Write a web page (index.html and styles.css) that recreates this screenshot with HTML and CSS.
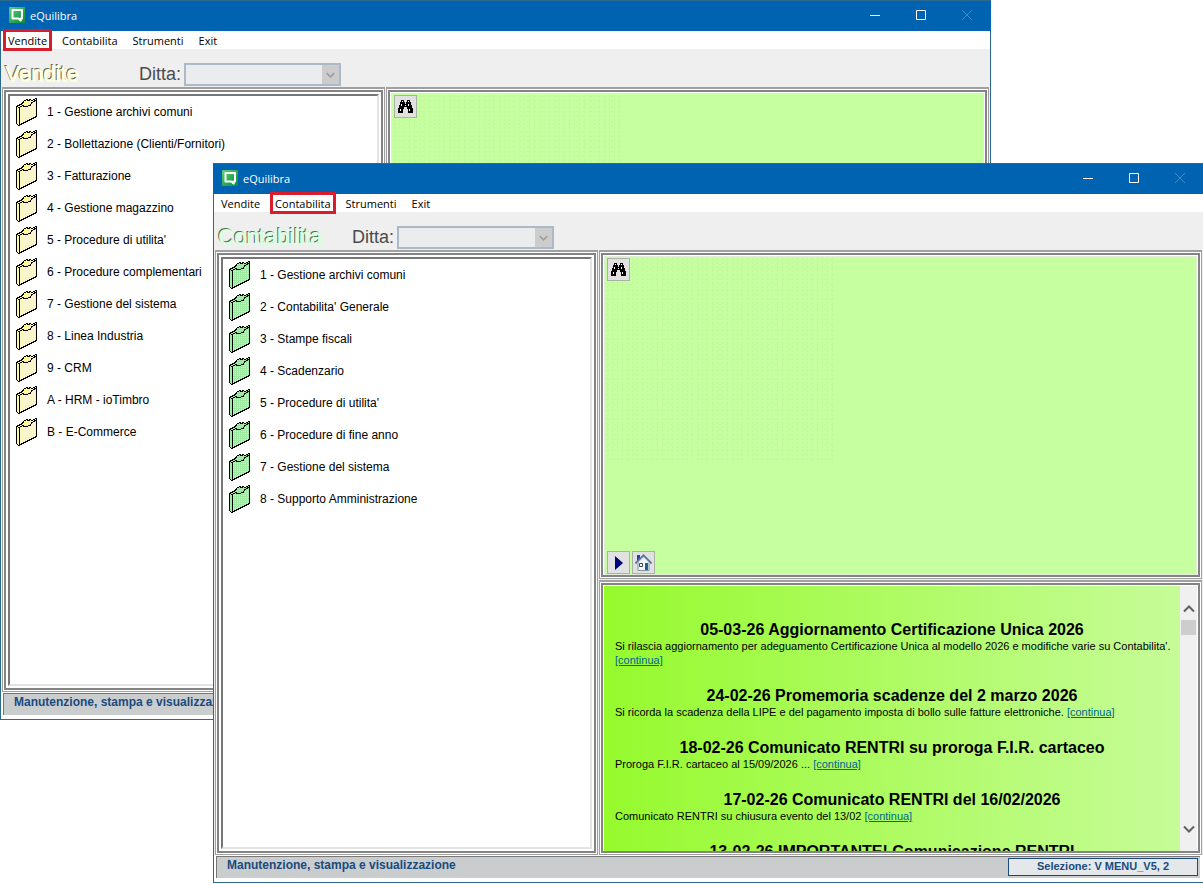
FILE: index.html
```html
<!DOCTYPE html>
<html lang="it">
<head>
    <meta charset="UTF-8">
    <meta name="viewport" content="width=device-width, initial-scale=1.0">
    <title>eQuilibra</title>
    <link rel="stylesheet" href="styles.css">
</head>
<body>
    <!-- shared icons -->
    <svg class="defs" width="0" height="0" aria-hidden="true">
        <defs>
            <linearGradient id="logo-green" x1="0" y1="0" x2="1" y2="1">
                <stop offset="0" stop-color="#5fce7a"/>
                <stop offset="1" stop-color="#0b8a3c"/>
            </linearGradient>
            <pattern id="dots" width="2" height="2" patternUnits="userSpaceOnUse">
                <rect width="1" height="1" fill="#fff"/>
            </pattern>
        </defs>
        <symbol id="logo" viewBox="0 0 16 16">
            <rect width="16" height="16" rx="1" fill="url(#logo-green)"/>
            <path d="M3.500 3h9.500v8.500h-1.500v2l-2-2h-6z" fill="none" stroke="#fff" stroke-width="2" stroke-linejoin="round"/>
            <path d="M9 11h3.500v3.500z" fill="#fff"/>
        </symbol>
        <symbol id="folder" viewBox="0 0 21 28">
            <g shape-rendering="crispEdges">
                <path d="M.5 8.500l6-3 1-2 3-2 2 1 2-1 1 1 5-2v18l-18 9-2-2z" fill="currentColor" stroke="#000"/>
                <path d="M4 10l4-2 2 1 6-3 0-2 4-2v16l-16 8z" fill="url(#dots)" opacity=".5"/>
                <path d="M3 9.500l4-2 2 1.500 5-1.500 2-3 4-2.500M3.500 9.500v17M.5 8.500l3 1" fill="none" stroke="#000"/>
            </g>
        </symbol>
        <symbol id="binoculars" viewBox="0 0 15 13">
            <g shape-rendering="crispEdges">
                <path d="M3 0h3v2h1v2h1V2h1V0h3v2h1v3h1v3h1v5h-5V9H9V7H6v2H5v4H0V8h1V5h1V2h1z" fill="#000"/>
                <path d="M4 1h1v1H4zM10 1h1v1h-1zM3 4h1v2H3zM10 4h1v2h-1zM7 5h1v1H7zM2 9h1v2H2zM11 9h1v2h-1z" fill="#fff"/>
            </g>
        </symbol>
        <symbol id="chevron" viewBox="0 0 12 8">
            <path d="M1 1.500l5 5 5-5" fill="none" stroke="currentColor" stroke-width="2"/>
        </symbol>
    </svg>

    <main class="desktop">
        <section class="window window-vendite" aria-label="eQuilibra - Vendite">
            <header class="titlebar">
                <svg class="logo"><use href="#logo"/></svg>
                <span class="titlebar-text">eQuilibra</span>
                <button class="caption" aria-label="Riduci"><svg viewBox="0 0 10 10"><path d="M0 5.500h10"/></svg></button>
                <button class="caption" aria-label="Ingrandisci"><svg viewBox="0 0 10 10"><path d="M.5.5h9v9h-9z"/></svg></button>
                <button class="caption" aria-label="Chiudi" disabled><svg viewBox="0 0 10 10"><path d="M0 0l10 10M10 0L0 10"/></svg></button>
            </header>
            <nav class="menubar">
                <button class="marked">Vendite</button>
                <button>Contabilita</button>
                <button>Strumenti</button>
                <button>Exit</button>
            </nav>
            <div class="toolbar">
                <h1 class="module yellow">Vendite</h1>
                <label for="ditta-vendite">Ditta:</label>
                <span class="combo">
                    <select id="ditta-vendite" disabled></select>
                    <svg><use href="#chevron"/></svg>
                </span>
            </div>
            <div class="body">
                <div class="frame frame-list">
                    <ul class="list yellow">
                        <li><svg><use href="#folder"/></svg>1 - Gestione archivi comuni</li>
                        <li><svg><use href="#folder"/></svg>2 - Bollettazione (Clienti/Fornitori)</li>
                        <li><svg><use href="#folder"/></svg>3 - Fatturazione</li>
                        <li><svg><use href="#folder"/></svg>4 - Gestione magazzino</li>
                        <li><svg><use href="#folder"/></svg>5 - Procedure di utilita'</li>
                        <li><svg><use href="#folder"/></svg>6 - Procedure complementari</li>
                        <li><svg><use href="#folder"/></svg>7 - Gestione del sistema</li>
                        <li><svg><use href="#folder"/></svg>8 - Linea Industria</li>
                        <li><svg><use href="#folder"/></svg>9 - CRM</li>
                        <li><svg><use href="#folder"/></svg>A - HRM - ioTimbro</li>
                        <li><svg><use href="#folder"/></svg>B - E-Commerce</li>
                    </ul>
                </div>
                <div class="side">
                    <div class="frame">
                        <div class="viewer">
                            <button class="tool" aria-label="Cerca"><svg class="icon-find"><use href="#binoculars"/></svg></button>
                        </div>
                    </div>
                </div>
            </div>
            <footer class="statusbar">
                <span class="hint">Manutenzione, stampa e visualizzazione</span>
            </footer>
        </section>

        <section class="window window-contabilita" aria-label="eQuilibra - Contabilita">
            <header class="titlebar">
                <svg class="logo"><use href="#logo"/></svg>
                <span class="titlebar-text">eQuilibra</span>
                <button class="caption" aria-label="Riduci"><svg viewBox="0 0 10 10"><path d="M0 5.500h10"/></svg></button>
                <button class="caption" aria-label="Ingrandisci"><svg viewBox="0 0 10 10"><path d="M.5.5h9v9h-9z"/></svg></button>
                <button class="caption" aria-label="Chiudi" disabled><svg viewBox="0 0 10 10"><path d="M0 0l10 10M10 0L0 10"/></svg></button>
            </header>
            <nav class="menubar">
                <button>Vendite</button>
                <button class="marked">Contabilita</button>
                <button>Strumenti</button>
                <button>Exit</button>
            </nav>
            <div class="toolbar">
                <h1 class="module green">Contabilita</h1>
                <label for="ditta-contabilita">Ditta:</label>
                <span class="combo">
                    <select id="ditta-contabilita" disabled></select>
                    <svg><use href="#chevron"/></svg>
                </span>
            </div>
            <div class="body">
                <div class="frame frame-list">
                    <ul class="list green">
                        <li><svg><use href="#folder"/></svg>1 - Gestione archivi comuni</li>
                        <li><svg><use href="#folder"/></svg>2 - Contabilita' Generale</li>
                        <li><svg><use href="#folder"/></svg>3 - Stampe fiscali</li>
                        <li><svg><use href="#folder"/></svg>4 - Scadenzario</li>
                        <li><svg><use href="#folder"/></svg>5 - Procedure di utilita'</li>
                        <li><svg><use href="#folder"/></svg>6 - Procedure di fine anno</li>
                        <li><svg><use href="#folder"/></svg>7 - Gestione del sistema</li>
                        <li><svg><use href="#folder"/></svg>8 - Supporto Amministrazione</li>
                    </ul>
                </div>
                <div class="side">
                    <div class="frame">
                        <div class="viewer">
                            <button class="tool" aria-label="Cerca"><svg class="icon-find"><use href="#binoculars"/></svg></button>
                            <div class="tools">
                                <button class="tool" aria-label="Avvia">
                                    <svg class="icon-play" viewBox="0 0 8 14"><path d="M0 0l8 7-8 7z" fill="#00007c"/></svg>
                                </button>
                                <button class="tool" aria-label="Home">
                                    <svg class="icon-home" viewBox="0 0 17 17">
                                        <path d="M2 1h3v6H2z" fill="#2a3ea8"/>
                                        <path d="M3 8l5.500-6L14 8v8.500H3z" fill="#eef4f8" stroke="#8793a0"/>
                                        <path d="M.5 9.500l8-8 8 8" fill="none" stroke="#56759a" stroke-width="2"/>
                                        <path d="M2 9.500l6.500-6.500L15 9.500" fill="none" stroke="#c5d8e8"/>
                                        <path d="M4.500 9.500h3v3h-3z" fill="#fff" stroke="#444"/>
                                        <path d="M10 9h3v7h-3z" fill="#1d5f9c"/>
                                    </svg>
                                </button>
                            </div>
                        </div>
                    </div>
                    <div class="frame">
                        <div class="news">
                            <div class="news-text">
                                <article>
                                    <h2>05-03-26 Aggiornamento Certificazione Unica 2026</h2>
                                    <p>Si rilascia aggiornamento per adeguamento Certificazione Unica al modello 2026 e modifiche varie su Contabilita'. <a href="#">[continua]</a></p>
                                </article>
                                <article>
                                    <h2>24-02-26 Promemoria scadenze del 2 marzo 2026</h2>
                                    <p>Si ricorda la scadenza della LIPE e del pagamento imposta di bollo sulle fatture elettroniche. <a href="#">[continua]</a></p>
                                </article>
                                <article>
                                    <h2>18-02-26 Comunicato RENTRI su proroga F.I.R. cartaceo</h2>
                                    <p>Proroga F.I.R. cartaceo al 15/09/2026 ... <a href="#">[continua]</a></p>
                                </article>
                                <article>
                                    <h2>17-02-26 Comunicato RENTRI del 16/02/2026</h2>
                                    <p>Comunicato RENTRI su chiusura evento del 13/02 <a href="#">[continua]</a></p>
                                </article>
                                <article>
                                    <h2>13-02-26 IMPORTANTE! Comunicazione RENTRI</h2>
                                </article>
                            </div>
                            <div class="scrollbar">
                                <button class="scroll-up" aria-label="Su"><svg><use href="#chevron"/></svg></button>
                                <div class="thumb"></div>
                                <button class="scroll-down" aria-label="Giu"><svg><use href="#chevron"/></svg></button>
                            </div>
                        </div>
                    </div>
                </div>
            </div>
            <footer class="statusbar">
                <span class="hint">Manutenzione, stampa e visualizzazione</span>
                <span class="selection">Selezione: V MENU_V5, 2</span>
            </footer>
        </section>
    </main>
</body>
</html>
```
FILE: styles.css
```css
* {
    box-sizing: border-box;
}
body {
    margin: 0;
    background-color: #fff;
    font-family: "Liberation Sans", Arial, sans-serif;
    font-size: 12px;
    color: #000;
}
button {
    border: none;
    background: none;
    padding: 0;
    font: inherit;
    color: inherit;
}
svg {
    display: block;
}
.defs {
    position: absolute;
}

/* desktop and windows */
.desktop {
    position: relative;
    height: 100vh;
    min-height: 600px;
    overflow: hidden;
}
.window {
    position: absolute;
    display: flex;
    flex-direction: column;
    border: 1px solid #2b6a8e;
    background-color: #efefef;
}
.window-vendite {
    top: 0;
    left: 0;
    right: 212px;
    bottom: 164px;
}
.window-contabilita {
    top: 163px;
    left: 213px;
    right: -1px;
    bottom: 1px;
}

/* title bar */
.titlebar {
    display: flex;
    align-items: center;
    height: 30px;
    margin: 0 -1px;
    padding-left: 9px;
    padding-right: 1px;
    background-color: #0063b1;
    color: #fff;
    font-family: "Open Sans", "Noto Sans", sans-serif;
    font-size: 11px;
}
.logo {
    width: 16px;
    height: 16px;
    margin-bottom: 2px;
}
.titlebar-text {
    flex: 1;
    margin-left: 5px;
    margin-bottom: 2px;
}
.caption {
    display: flex;
    align-items: center;
    justify-content: center;
    width: 46px;
    height: 28px;
    margin-bottom: 2px;
}
.caption svg {
    width: 10px;
    height: 10px;
    fill: none;
    stroke: #fff;
}
.caption:disabled svg {
    stroke: #3f8ac6;
    overflow: visible;
}

/* menu */
.menubar {
    display: flex;
    height: 18px;
    background-color: #fff;
    font-family: "Open Sans", "Noto Sans", sans-serif;
    font-size: 11px;
}
.menubar button {
    height: 18px;
    margin: 0 5px 0 4px;
    padding: 2px 3px 0;
    line-height: 16px;
}
.menubar .marked {
    outline: 3px solid #d81e2c;
    outline-offset: -1px;
}

/* company row */
.toolbar {
    display: flex;
    align-items: center;
    height: 38px;
    padding: 12px 4px 0;
}
.module {
    width: 134px;
    margin: 0;
    font-size: 22px;
    font-weight: normal;
    line-height: 24px;
}
.module.yellow {
    color: #ffffe0;
    text-shadow: 1px 1px 0 #ffffe0, -1px -1px 0 #66664e;
}
.module.green {
    color: #dcffe0;
    text-shadow: 1px 1px 0 #dcffe0, -1px -1px 0 #4f7055;
}
.toolbar label {
    color: #4b4b4b;
    font-size: 18px;
    line-height: 24px;
}
.combo {
    position: relative;
    margin-left: 3px;
}
.combo select {
    display: block;
    width: 157px;
    height: 23px;
    appearance: none;
    border: 2px solid #abb9c9;
    border-radius: 0;
    background: linear-gradient(to left, #cccccc 17px, #ebecee 17px);
    opacity: 1;
}
.combo svg {
    position: absolute;
    top: 9px;
    right: 6px;
    width: 9px;
    height: 6px;
    color: #9d9d9d;
}

/* panels */
.body {
    flex: 1;
    min-height: 0;
    display: grid;
    grid-template-columns: 383fr 603fr;
    gap: 1px;
    padding: 0 1px;
}
.side {
    display: grid;
    grid-template-rows: 329fr 275fr;
    gap: 1px;
    min-height: 0;
}
.frame {
    display: grid;
    min-width: 0;
    min-height: 0;
    padding: 5px 5px 4px;
    border-top: 1px solid #a0a0a0;
    background-color: #fff;
    box-shadow: inset 0 0 0 1px #a0a0a0, inset 0 0 0 2px #fff, inset 0 0 0 4px #848484;
}
.frame-list {
    padding: 6px;
}
.list {
    margin: 0;
    padding: 0 6px;
    list-style: none;
    border: 2px solid #777;
    border-right-color: #e3e3e3;
    border-bottom-color: #e3e3e3;
    background-color: #fff;
}
.list li {
    display: flex;
    align-items: center;
    gap: 10px;
    height: 32px;
}
.list svg {
    width: 21px;
    height: 28px;
}
.list.yellow svg {
    color: #fff7a0;
}
.list.green svg {
    color: #9deba2;
}
.viewer {
    position: relative;
    display: flex;
    flex-direction: column;
    justify-content: space-between;
    padding: 1px 2px 0;
    border: 1px solid #e2ecd8;
    background-color: #c6ffa0;
}
/* grain in the top left corner */
.viewer::before {
    content: "";
    position: absolute;
    top: 0;
    left: 0;
    width: 230px;
    height: 206px;
    max-width: 100%;
    max-height: 100%;
    background-image: radial-gradient(#b9ec95 1px, transparent 1px), radial-gradient(#bcf097 1px, transparent 1px);
    background-size: 5px 4px, 7px 5px;
    opacity: .4;
}
.tools {
    display: flex;
    gap: 2px;
}
.tool {
    position: relative;
    display: flex;
    align-items: center;
    justify-content: center;
    width: 23px;
    height: 23px;
    border: 1px solid #a9b3a3;
    background-color: #e1e1e1;
}
.icon-find {
    width: 15px;
    height: 13px;
}
.icon-play {
    width: 8px;
    height: 14px;
}
.icon-home {
    width: 17px;
    height: 17px;
}

/* news */
.news {
    display: flex;
    min-height: 0;
    overflow: hidden;
}
.news-text {
    flex: 1;
    padding: 33px 11px 0;
    background: linear-gradient(to right, #96fa2d, #c6fc98);
}
.news article {
    margin-bottom: 18px;
}
.news h2 {
    margin: 0;
    padding-top: 2px;
    font-size: 16px;
    line-height: 18px;
    text-align: center;
}
.news p {
    margin: 0 -10px 0 0;
    font-size: 11px;
    line-height: 14px;
}
.news a {
    color: #00668c;
}
.scrollbar {
    display: flex;
    flex-direction: column;
    width: 17px;
    padding: 14px 0;
    background-color: #f0f0f0;
    color: #606060;
}
.scrollbar button {
    display: flex;
    align-items: center;
    justify-content: center;
    width: 17px;
    height: 17px;
}
.scrollbar svg {
    width: 12px;
    height: 8px;
}
.scroll-up svg {
    transform: rotate(180deg);
}
.thumb {
    width: 15px;
    height: 15px;
    margin: 3px 1px auto;
    background-color: #cdcdcd;
}

/* status bar */
.statusbar {
    display: flex;
    justify-content: space-between;
    height: 27px;
    padding: 2px 2px 2px 11px;
    border: solid #fff;
    border-width: 1px 3px 4px 2px;
    background-color: #c9cdce;
    box-shadow: inset 1px 1px 0 #777;
    color: #1b4a7e;
    font-size: 11px;
    font-weight: bold;
}
.hint {
    font-size: 12px;
    line-height: 14px;
}
.selection {
    width: 190px;
    height: 18px;
    border: 1px solid #1b4a7e;
    background-color: #e4e8ea;
    line-height: 14px;
    text-align: center;
}
```
